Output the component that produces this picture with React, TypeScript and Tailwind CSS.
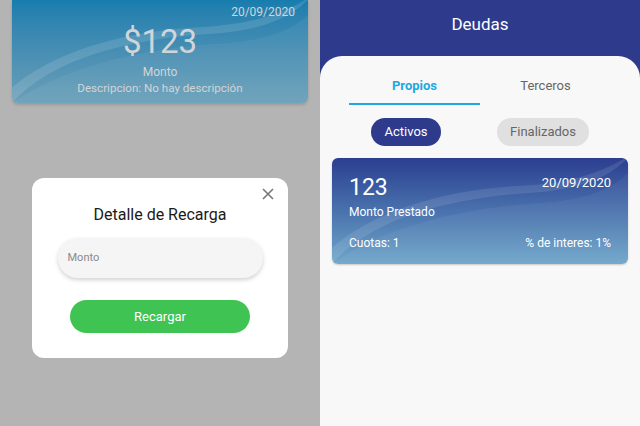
import React from "react";

function Wave({ light }: { light: boolean }) {
  return (
    <svg className="absolute inset-0 w-full h-full" viewBox="0 0 300 106" preserveAspectRatio="none">
      <path
        d="M0 106 C 40 60, 120 40, 200 35 C 250 32, 280 20, 300 0 L 300 -2 C 270 18, 230 26, 190 28 C 110 32, 40 55, 0 90 Z"
        fill="white"
        fillOpacity={light ? 0.12 : 0.1}
      />
      <path
        d="M0 106 C 50 70, 130 50, 210 45 C 260 42, 285 30, 300 15 L 300 106 Z"
        fill="white"
        fillOpacity={0.05}
      />
    </svg>
  );
}

export default function App() {
  return (
    <div className="flex w-[640px] h-[426px] overflow-hidden" style={{ fontFamily: "Roboto, 'Noto Sans', sans-serif" }}>
      {/* Left panel */}
      <div className="w-[320px] h-full bg-[#b4b4b4] flex flex-col">
        <div className="mx-3 h-[103px] rounded-b-md relative overflow-hidden bg-gradient-to-b from-[#177dae] to-[#6a9fb8] shadow-[0_2px_3px_rgba(0,0,0,0.15)]">
          <Wave light />
          <div className="relative flex flex-col items-center text-[#d2d5d8]">
            <div className="self-end pr-[13px] pt-[4px] text-[12px] leading-[16px]">20/09/2020</div>
            <div className="text-[33px] leading-[38px] mt-[3px]">$123</div>
            <div className="text-[12px] leading-[16px] mt-[3px]">Monto</div>
            <div className="text-[11.6px] leading-[16px]">Descripcion: No hay descripción</div>
          </div>
        </div>
        <div className="mt-[75px] mx-[32px] h-[180px] bg-white rounded-[12px] relative flex flex-col items-center">
          <svg className="absolute right-[14px] top-[10px]" width="12" height="12" viewBox="0 0 12 12">
            <path d="M1 1 L11 11 M11 1 L1 11" stroke="#777" strokeWidth="1.6" />
          </svg>
          <div className="mt-[27px] text-[16px] leading-[20px] text-[#1a1a1a]">Detalle de Recarga</div>
          <div className="mt-[13px] w-[205px] h-[40px] rounded-full bg-[#f5f5f5] shadow-[0_2px_4px_rgba(0,0,0,0.18)] flex items-center px-[10px] text-[11px] text-[#8a8a8a]">
            Monto
          </div>
          <div className="mt-[22px] w-[180px] h-[33px] rounded-full bg-[#3fc353] flex items-center justify-center text-white text-[13px]">
            Recargar
          </div>
        </div>
      </div>

      {/* Right panel */}
      <div className="w-[320px] h-full bg-[#2e3a8c] flex flex-col">
        <div className="h-[56px] shrink-0 flex items-center justify-center text-white text-[17px] pb-[7px]">Deudas</div>
        <div className="flex-1 bg-[#f8f8f8] rounded-t-[22px] flex flex-col">
          <div className="mx-[29px] flex mt-[14px]">
            <div className="flex-1 flex flex-col items-center">
              <div className="text-[13px] leading-[30px] font-bold text-[#1ea8e3] mt-[1px]">Propios</div>
              <div className="w-full h-[2px] bg-[#1ea8e3] mt-[2px]"></div>
            </div>
            <div className="flex-1 flex flex-col items-center">
              <div className="text-[13px] leading-[30px] text-[#666] mt-[1px]">Terceros</div>
            </div>
          </div>
          <div className="flex mt-[13px] h-[28px]">
            <div className="w-[70px] ml-[51px] rounded-full bg-[#2e3a8c] text-white text-[13px] flex items-center justify-center">Activos</div>
            <div className="w-[92px] ml-[56px] rounded-full bg-[#e0e0e0] text-[#666] text-[13px] flex items-center justify-center">Finalizados</div>
          </div>
          <div className="mx-3 mt-[12px] h-[106px] rounded-md relative overflow-hidden bg-gradient-to-b from-[#2c3e90] to-[#6ea6c9] shadow-[0_1px_2px_rgba(0,0,0,0.2)]">
            <Wave light={false} />
            <div className="relative px-[17px] pt-[15px] text-white h-full flex flex-col">
              <div className="flex justify-between">
                <div className="text-[23px] leading-[30px]">123</div>
                <div className="text-[13px] leading-[16px] mt-[2px]">20/09/2020</div>
              </div>
              <div className="text-[12px] leading-[16px] mt-[1px]">Monto Prestado</div>
              <div className="flex justify-between mt-[15px] text-[12px] leading-[16px]">
                <div>Cuotas: 1</div>
                <div>% de interes: 1%</div>
              </div>
            </div>
          </div>
        </div>
      </div>
    </div>
  );
}
